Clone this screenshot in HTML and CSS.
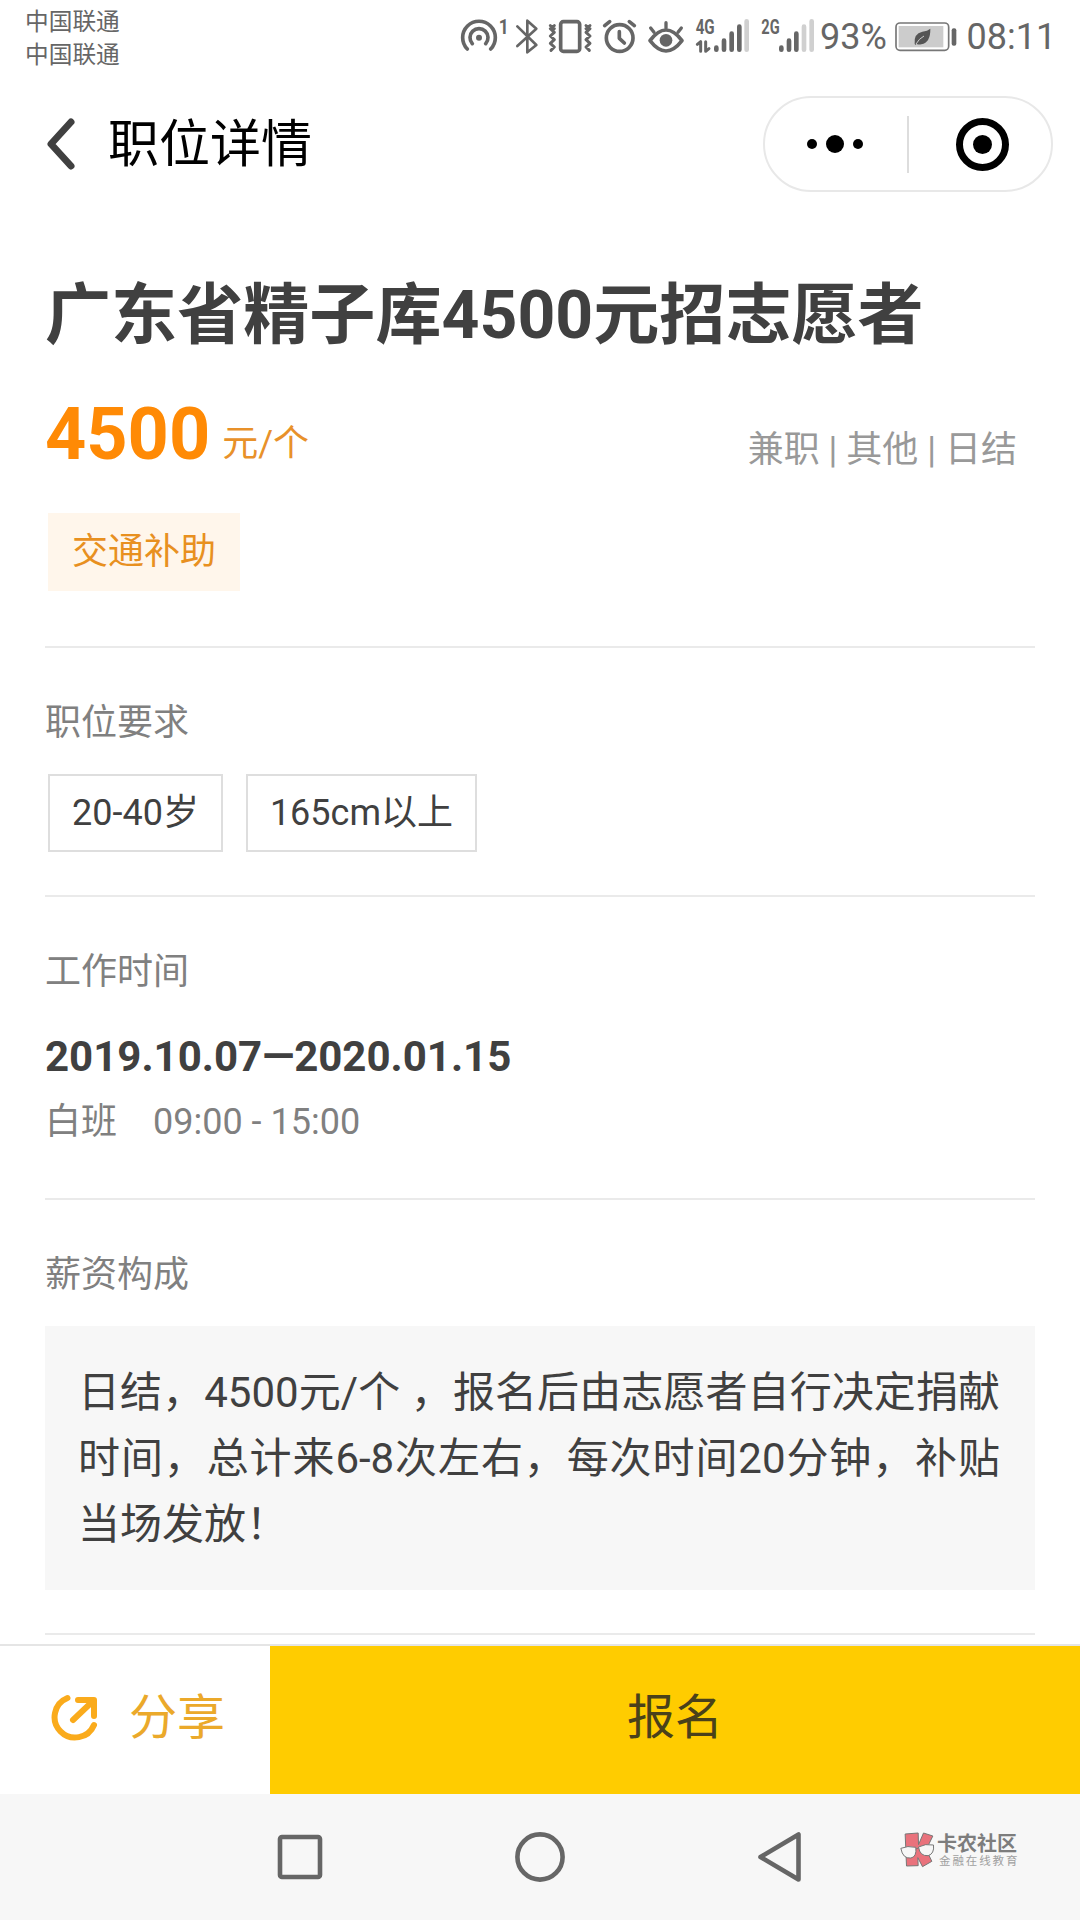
FILE: index.html
```html
<!DOCTYPE html>
<html lang="zh-CN">
<head>
<meta charset="utf-8">
<title>职位详情</title>
<link rel="stylesheet" href="styles.css">
</head>
<body>
<div class="screen">
  <header class="status">
    <div class="carriers"><span>中国联通</span><span>中国联通</span></div>
    <div class="status-right">
      <svg class="status-icons" viewBox="0 0 1110 216" fill="none" stroke="#666" stroke-width="11" stroke-linecap="round" stroke-linejoin="round">
        <path d="M52 147A49 49 0 1 1 122 147M67 131A27 27 0 1 1 107 131"/>
        <circle cx="87" cy="113" r="9" fill="#666" stroke="none"/>
        <text x="146" y="102" textLength="30" lengthAdjust="spacingAndGlyphs" class="mini">1</text>
        <path stroke-width="8" d="M202 79L259 135L232 157V62L259 86L202 138"/>
        <rect x="332" y="65" width="57" height="89" rx="8"/>
        <path stroke-width="9" d="M313 77L301 86L313 97L301 108L313 119L301 130L313 141L303 151M301 77L313 86M408 77L420 86L408 97L420 108L408 119L420 130L408 141L418 151M420 77L408 86"/>
        <circle cx="509" cy="114" r="40"/>
        <path d="M508 95V115L523 129M464 77L479 65M538 65L553 77"/>
        <path d="M600 122Q648 58 696 122Q648 184 600 122Z"/>
        <path stroke-width="10" d="M648 68V84M602 84L612 97M694 84L684 97"/>
        <circle cx="648" cy="121" r="19" fill="#666" stroke="none"/>
        <text x="737" y="102" textLength="57" lengthAdjust="spacingAndGlyphs" class="mini">4G</text>
        <path stroke-width="9" d="M742 133L752 125V154M767 125V154L777 146"/>
        <path stroke-width="14" d="M799 143V149M822 122V149M845 101V149M868 80V149"/>
        <path stroke="#d0d0d0" stroke-width="14" d="M890 64V149M1062 80V149M1085 64V149"/>
        <text x="934" y="102" textLength="55" lengthAdjust="spacingAndGlyphs" class="mini">2G</text>
        <path stroke-width="14" d="M994 143V149M1017 122V149M1039 101V149"/>
      </svg>
      <span class="percent">93%</span>
      <svg class="battery" viewBox="0 0 186 90">
        <rect x="3" y="3" width="158" height="82" rx="12" fill="#fff" stroke="#777" stroke-width="5"/>
        <rect x="11" y="12" width="134" height="64" fill="#ccc"/>
        <rect x="170" y="19" width="14" height="52" rx="6" fill="#666"/>
        <path d="M106 20Q107 61 79 67Q69 69 65 65L62 69L59 66Q55 35 82 29Q98 27 106 20Z" fill="#555"/>
        <path d="M63 66Q72 50 87 42" fill="none" stroke="#ccc" stroke-width="3"/>
      </svg>
      <span class="clock">08:11</span>
    </div>
  </header>

  <nav class="navbar">
    <svg class="back" viewBox="0 0 30 54"><path d="M25 5L5 27L25 49" fill="none" stroke="#404040" stroke-width="7" stroke-linecap="round" stroke-linejoin="round"/></svg>
    <h1 class="page-title">职位详情</h1>
    <div class="capsule">
      <svg class="more" viewBox="0 0 58 20"><circle cx="6" cy="10" r="5"/><circle cx="29" cy="10" r="9"/><circle cx="52" cy="10" r="5"/></svg>
      <i class="capsule-line"></i>
      <svg class="target" viewBox="0 0 54 54"><circle cx="27.500" cy="27.500" r="23" fill="none" stroke="#000" stroke-width="7"/><circle cx="27.500" cy="27.500" r="9.500"/></svg>
    </div>
  </nav>

  <main class="content">
    <section class="summary">
      <h2 class="job-title">广东省精子库4500元招志愿者</h2>
      <div class="price-row">
        <span class="price">4500</span>
        <span class="unit">元/个</span>
        <span class="meta">兼职 | 其他 | 日结</span>
      </div>
      <span class="tag">交通补助</span>
    </section>

    <section class="block requirements">
      <h3 class="label">职位要求</h3>
      <div class="chips"><span class="chip">20-40岁</span><span class="chip">165cm以上</span></div>
    </section>

    <section class="block schedule">
      <h3 class="label">工作时间</h3>
      <p class="dates">2019.10.07—2020.01.15</p>
      <p class="shift"><span>白班</span><span>09:00 - 15:00</span></p>
    </section>

    <section class="block salary">
      <h3 class="label">薪资构成</h3>
      <p class="note">日结，4500元/个 ，报名后由志愿者自行决定捐献时间，总计来6-8次左右，每次时间20分钟，补贴当场发放！</p>
    </section>
    <section class="block"></section>
  </main>

  <footer class="actions">
    <div class="share">
      <svg class="share-icon" viewBox="0 0 50 50" fill="none" stroke="#faab1c" stroke-width="6" stroke-linecap="round" stroke-linejoin="round">
        <path d="M18.500 6A20.500 20.500 0 1 0 45 33"/>
        <path d="M24 28L44 9M29 8H45V24"/>
      </svg>
      <span>分享</span>
    </div>
    <div class="apply">报名</div>
  </footer>

  <div class="system-nav">
    <svg class="keys" viewBox="0 0 540 54" fill="none" stroke="#666" stroke-width="4.600" stroke-linejoin="round">
      <rect x="10" y="7" width="40" height="40" rx="2"/>
      <circle cx="270" cy="27" r="22.600"/>
      <path d="M490.500 27L528.500 4.500V49.500Z"/>
    </svg>
    <div class="brand">
      <svg class="brand-logo" viewBox="0 0 104 108" stroke="#777" stroke-width="3" stroke-linejoin="round">
        <path d="M15 6L54 3L55 38L70 3L98 12L78 53L95 88L67 104L53 77L54 101L19 102Z" fill="#e9727c"/>
        <path d="M2 49Q22 40 47 46Q50 75 32 78Q8 81 2 49ZM55 45Q75 34 100 39Q103 65 84 71Q59 73 55 45ZM47 51L55 48" fill="#f7f7f7"/>
      </svg>
      <div class="brand-text"><b>卡农社区</b><small>金融在线教育</small></div>
    </div>
  </div>
</div>
</body>
</html>
```

FILE: styles.css
```css
* { box-sizing: border-box; margin: 0; padding: 0; }
body {
  width: 1080px;
  height: 1920px;
  overflow: hidden;
  background: #fff;
  color: #404040;
  font-family: Roboto, "Noto Sans CJK SC", sans-serif;
  font-size: 36px;
}
svg { display: block; flex: none; }
.screen { display: flex; flex-direction: column; height: 1920px; }

.status { display: flex; height: 72px; color: #666; }
.carriers {
  display: flex;
  flex-direction: column;
  width: 450px;
  padding: 6px 0 0 25px;
  font-size: 23.7px;
  line-height: 32.5px;
}
.status-right { display: flex; flex: 1; line-height: 75px; }
.status-icons { width: 370px; height: 72px; }
.mini { font: bold 63px Roboto, sans-serif; fill: #666; stroke: none; }
.percent { width: 75px; }
.battery { width: 62px; height: 30px; margin-top: 22px; }
.clock { margin-left: 9.5px; }

.navbar { display: flex; align-items: center; height: 144px; padding: 0 27px 0 46px; }
.back { width: 30px; height: 54px; }
.page-title { margin-left: 32px; padding-top: 2px; font-size: 51px; font-weight: 400; line-height: 72px; color: #000; }
.capsule {
  display: flex;
  align-items: center;
  width: 290px;
  height: 96px;
  margin-left: auto;
  border: 2px solid #e8e8e8;
  border-radius: 48px;
}
.more { width: 58px; height: 20px; margin-left: 41px; }
.capsule-line { width: 2px; height: 57px; margin-left: 43px; background: #ddd; }
.target { width: 54px; height: 54px; margin-left: 46px; }

.content { height: 1428px; padding: 0 45px; overflow: hidden; }
.summary { height: 430px; padding-top: 53px; }
.job-title { font-size: 66.1px; line-height: 93px; font-weight: 700; white-space: nowrap; }
.price-row { display: flex; height: 85px; margin: 30px 0 36px; line-height: 85px; }
.price { font-size: 72px; font-weight: 700; color: #ff8a05; }
.unit { margin: 10px 0 0 12px; color: #e8912a; }
.meta { margin: 16px 18px 0 auto; color: #999; }
.tag { display: block; width: 192px; margin-left: 3px; background: #fff6eb; color: #e8901f; line-height: 78px; text-align: center; }

.block { border-top: 2px solid #eaeaea; padding-top: 50px; }
.label { font-size: 36px; font-weight: 400; line-height: 50px; color: #808080; }
.requirements { height: 249px; }
.chips { display: flex; gap: 23px; margin: 26px 0 0 3px; }
.chip { height: 78px; padding: 0 22px; border: 2px solid #dedede; line-height: 75px; }
.schedule { height: 303px; }
.dates { margin-top: 30px; font-size: 42px; font-weight: 700; line-height: 60px; }
.shift { display: flex; gap: 36px; margin-top: 10px; line-height: 50px; color: #808080; }
.salary { height: 435px; }
.note {
  height: 264px;
  margin-top: 26px;
  padding: 34px 35px 0 33px;
  background: #f7f7f7;
  font-size: 42px;
  line-height: 66px;
  text-align: justify;
}

.actions { display: flex; height: 150px; border-top: 2px solid #e5e5e5; font-size: 48px; line-height: 144px; }
.share { display: flex; width: 270px; padding-left: 49px; color: #eba92a; }
.share-icon { width: 50px; height: 50px; margin: 46px 30px 0 0; }
.apply { flex: 1; background: #fc0; color: #4a411a; text-align: center; }

.system-nav { display: flex; flex: 1; padding-left: 270px; background: #f7f7f7; }
.keys { width: 540px; height: 54px; margin-top: 36px; }
.brand { display: flex; margin: 38px 0 0 90px; }
.brand-logo { width: 35px; height: 36px; }
.brand-text { display: flex; flex-direction: column; margin-left: 2px; padding-top: 1px; white-space: nowrap; }
.brand-text b { font-size: 20px; line-height: 23px; color: #7d7d7d; }
.brand-text small { margin-left: 2px; font-size: 11.5px; line-height: 11px; height: 16px; letter-spacing: 1.9px; color: #a0a0a0; }
```
